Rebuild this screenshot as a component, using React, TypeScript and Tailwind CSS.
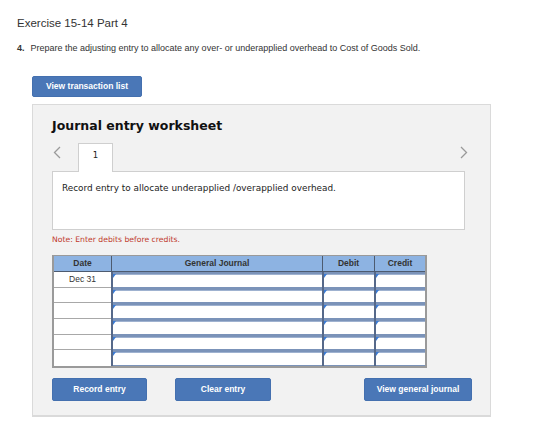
import React from "react";

const Chevron = ({ dir }: { dir: "left" | "right" }) => (
  <svg width="8" height="13" viewBox="0 0 8 13" fill="none">
    {dir === "left" ? (
      <path d="M7 1 L1.5 6.5 L7 12" stroke="#9a9a9a" strokeWidth="1.3" />
    ) : (
      <path d="M1 1 L6.5 6.5 L1 12" stroke="#9a9a9a" strokeWidth="1.3" />
    )}
  </svg>
);

const InputCell = () => (
  <div className="relative h-full bg-[#7b93b9] pt-[2px] pb-[1px] border-l-2 border-[#56698a]">
    <div className="h-full bg-white border-t border-[#9fb2d0]" />
    <div className="absolute left-0 top-[2px] w-0 h-0 border-t-[4px] border-r-[3px] border-t-[#3a7bd5] border-r-transparent" />
  </div>
);

export default function App() {
  const rows = [0, 1, 2, 3, 4, 5];
  return (
    <div className="w-[560px] h-[447px] bg-white text-[#333] font-['Liberation_Sans',Arial,sans-serif]">
      <div className="pl-[17px] pt-[16px]">
        <h1 className="text-[11.5px] leading-[14px] text-[#333]">Exercise 15-14 Part 4</h1>
        <p className="mt-[13px] text-[9px] leading-[11px] text-[#333]">
          <span className="font-bold">4.</span>
          <span className="ml-[6px]">
            Prepare the adjusting entry to allocate any over- or underapplied overhead to Cost of Goods Sold.
          </span>
        </p>
        <button className="ml-[15px] mt-[22px] w-[110px] h-[21px] rounded-[2px] bg-[#4a77b7] border border-[#4470af] text-white text-[8.5px] font-bold flex items-center justify-center">
          View transaction list
        </button>
        <div className="ml-[15px] mt-[7px] w-[459px] h-[313px] bg-[#f2f2f2] border border-[#dadada] border-b-2 pl-[19px] pr-[18px] pt-[13px]">
          <h2 className="font-['DejaVu_Sans',Verdana,sans-serif] font-bold text-[12.5px] leading-[16px] text-[#111]">
            Journal entry worksheet
          </h2>
          <div className="mt-[9px] flex items-start w-[416px] h-[28px]">
            <div className="ml-[1px] mt-[3px]">
              <Chevron dir="left" />
            </div>
            <div className="ml-[17px] w-[35px] h-[29px] bg-white border border-b-0 border-[#cfcfcf] relative z-10 flex justify-center pt-[5px] text-[8.5px] font-['DejaVu_Sans',Verdana,sans-serif] text-[#222]">
              1
            </div>
            <div className="ml-auto mt-[3px]">
              <Chevron dir="right" />
            </div>
          </div>
          <div className="w-[413px] h-[59px] bg-white border border-[#cfcfcf] pl-[9px] pt-[10px] text-[8.9px] leading-[12px] font-['DejaVu_Sans',Verdana,sans-serif] text-[#222]">
            Record entry to allocate underapplied /overapplied overhead.
          </div>
          <p className="mt-[5px] text-[7.7px] leading-[10px] text-[#c0392b] font-['DejaVu_Sans',Verdana,sans-serif]">
            Note: Enter debits before credits.
          </p>
          <div className="mt-[10px] w-[375px] border-l-2 border-r-2 border-b-2 border-t border-[#9a9a9a]">
            <div className="grid grid-cols-[57px_211px_52px_51px] h-[16px] bg-[#8db3e2] border-b border-[#4d5b70] text-[8.5px] font-bold text-[#333]">
              <div className="flex items-center justify-center">Date</div>
              <div className="flex items-center justify-center border-l border-[#4d5b70]">General Journal</div>
              <div className="flex items-center justify-center border-l border-[#4d5b70]">Debit</div>
              <div className="flex items-center justify-center border-l border-[#4d5b70]">Credit</div>
            </div>
            {rows.map((i) => (
              <div key={i} className="grid grid-cols-[57px_211px_52px_51px] h-[15.67px]">
                <div
                  className={`bg-white flex items-center justify-center text-[8.5px] text-[#333] ${
                    i < 5 ? "border-b border-[#a8a8a8]" : ""
                  }`}
                >
                  {i === 0 ? "Dec 31" : ""}
                </div>
                <InputCell />
                <InputCell />
                <InputCell />
              </div>
            ))}
          </div>
          <div className="mt-[10px] flex w-[420px]">
            <button className="w-[95px] h-[23px] rounded-[2px] bg-[#4a77b7] border border-[#4470af] text-white text-[8.5px] font-bold flex items-center justify-center">
              Record entry
            </button>
            <button className="ml-[28px] w-[96px] h-[23px] rounded-[2px] bg-[#4a77b7] border border-[#4470af] text-white text-[8.5px] font-bold flex items-center justify-center">
              Clear entry
            </button>
            <button className="ml-auto w-[108px] h-[23px] rounded-[2px] bg-[#4a77b7] border border-[#4470af] text-white text-[8.5px] font-bold flex items-center justify-center">
              View general journal
            </button>
          </div>
        </div>
      </div>
    </div>
  );
}
